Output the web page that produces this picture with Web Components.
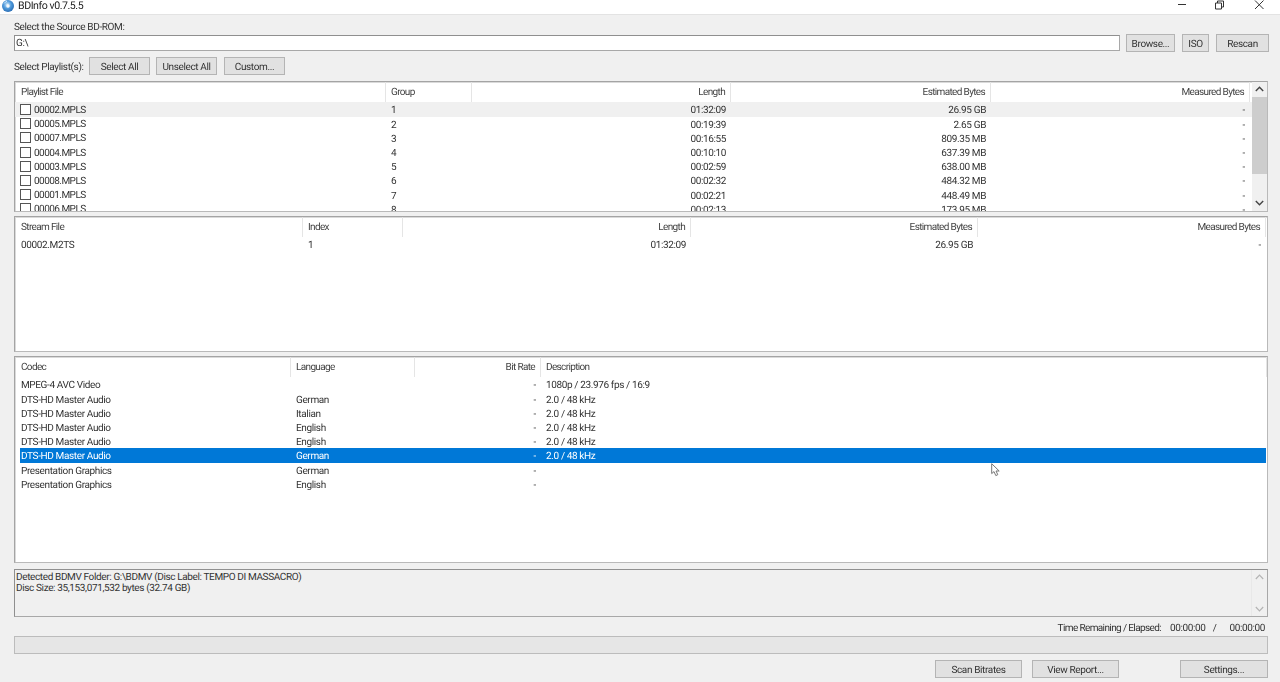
<!DOCTYPE html>
<html><head><meta charset="utf-8"><title>BDInfo</title>
<style>
html,body{margin:0;padding:0;height:100%;overflow:hidden}
body{background:#f0f0f0;font:10px Roboto,"Liberation Sans",Arial,sans-serif;letter-spacing:-.37px;text-rendering:geometricPrecision;color:#333;position:relative;width:1280px;height:682px}
.r{text-align:right}
</style></head><body>
<app-window>
  <title-bar slot="top">BDInfo v0.7.5.5</title-bar>
  <text-label style="height:13px;margin-top:5px">Select the Source BD-ROM:</text-label>
  <tool-row style="margin-top:1px;height:18px;margin-right:-1px">
    <text-box style="flex:1;margin-right:6px">G:\</text-box>
    <win-button style="width:49px;margin-right:7px">Browse...</win-button>
    <win-button style="width:27px;margin-right:7px">ISO</win-button>
    <win-button style="width:53px">Rescan</win-button>
  </tool-row>
  <tool-row style="margin-top:5px;height:18px">
    <text-label style="width:75px;align-self:center">Select Playlist(s):</text-label>
    <win-button style="width:61px;margin-right:6px">Select All</win-button>
    <win-button style="width:61px;margin-right:7px">Unselect All</win-button>
    <win-button style="width:61px">Custom...</win-button>
  </tool-row>

  <list-view style="height:131px;margin-top:6px;--cols:371px 86px 259px 260px 259px" scroll>
    <list-row header><span>Playlist File</span><span>Group</span><span class="r">Length</span><span class="r">Estimated Bytes</span><span class="r">Measured Bytes</span></list-row>
    <list-row hot><check-cell>00002.MPLS</check-cell><span>1</span><span class="r">01:32:09</span><span class="r">26.95 GB</span><span class="r">-</span></list-row>
    <list-row><check-cell>00005.MPLS</check-cell><span>2</span><span class="r">00:19:39</span><span class="r">2.65 GB</span><span class="r">-</span></list-row>
    <list-row><check-cell>00007.MPLS</check-cell><span>3</span><span class="r">00:16:55</span><span class="r">809.35 MB</span><span class="r">-</span></list-row>
    <list-row><check-cell>00004.MPLS</check-cell><span>4</span><span class="r">00:10:10</span><span class="r">637.39 MB</span><span class="r">-</span></list-row>
    <list-row><check-cell>00003.MPLS</check-cell><span>5</span><span class="r">00:02:59</span><span class="r">638.00 MB</span><span class="r">-</span></list-row>
    <list-row><check-cell>00008.MPLS</check-cell><span>6</span><span class="r">00:02:32</span><span class="r">484.32 MB</span><span class="r">-</span></list-row>
    <list-row><check-cell>00001.MPLS</check-cell><span>7</span><span class="r">00:02:21</span><span class="r">448.49 MB</span><span class="r">-</span></list-row>
    <list-row><check-cell>00006.MPLS</check-cell><span>8</span><span class="r">00:02:13</span><span class="r">173.95 MB</span><span class="r">-</span></list-row>
  </list-view>

  <list-view style="height:136px;margin-top:4px;--cols:288px 100px 288px 287px 288px">
    <list-row header><span>Stream File</span><span>Index</span><span class="r">Length</span><span class="r">Estimated Bytes</span><span class="r">Measured Bytes</span></list-row>
    <list-row><span>00002.M2TS</span><span>1</span><span class="r">01:32:09</span><span class="r">26.95 GB</span><span class="r">-</span></list-row>
  </list-view>

  <list-view style="height:207px;margin-top:4px;--cols:276px 124px 126px 726px">
    <list-row header><span>Codec</span><span>Language</span><span class="r">Bit Rate</span><span>Description</span></list-row>
    <list-row><span>MPEG-4 AVC Video</span><span></span><span class="r">-</span><span>1080p / 23.976 fps / 16:9</span></list-row>
    <list-row><span>DTS-HD Master Audio</span><span>German</span><span class="r">-</span><span>2.0 / 48 kHz</span></list-row>
    <list-row><span>DTS-HD Master Audio</span><span>Italian</span><span class="r">-</span><span>2.0 / 48 kHz</span></list-row>
    <list-row><span>DTS-HD Master Audio</span><span>English</span><span class="r">-</span><span>2.0 / 48 kHz</span></list-row>
    <list-row><span>DTS-HD Master Audio</span><span>English</span><span class="r">-</span><span>2.0 / 48 kHz</span></list-row>
    <list-row selected><span>DTS-HD Master Audio</span><span>German</span><span class="r">-</span><span>2.0 / 48 kHz</span></list-row>
    <list-row><span>Presentation Graphics</span><span>German</span><span class="r">-</span><span></span></list-row>
    <list-row><span>Presentation Graphics</span><span>English</span><span class="r">-</span><span></span></list-row>
  </list-view>

  <log-box style="height:48px;margin-top:6px">Detected BDMV Folder: G:\BDMV (Disc Label: TEMPO DI MASSACRO)<br>Disc Size: 35,153,071,532 bytes (32.74 GB)</log-box>

  <time-row style="height:14px;margin-top:4px"></time-row>
  <progress-bar style="height:18px;margin-top:1px"></progress-bar>

  <tool-row style="margin-top:6px;height:18px;justify-content:flex-end">
    <win-button style="width:87px;margin-right:10px">Scan Bitrates</win-button>
    <win-button style="width:87px;margin-right:61px">View Report...</win-button>
    <win-button style="width:88px">Settings...</win-button>
  </tool-row>
</app-window>
<mouse-cursor></mouse-cursor>
<script>
function def(name,css,html,init){
  customElements.define(name,class extends HTMLElement{
    constructor(){super();const s=this.attachShadow({mode:'open'});s.innerHTML='<style>'+css+'</style>'+html;}
    connectedCallback(){if(init)init(this)}
  });
}
def('app-window',`:host{display:flex;flex-direction:column;width:1280px;height:682px;box-sizing:border-box;filter:blur(.3px)}
 .main{display:flex;flex-direction:column;padding:0 12px 0 14px;flex:1;min-height:0;border-left:1px solid #e4e4e4;margin-left:-1px}`,
 `<slot name="top"></slot><div class="main"><slot></slot></div>`);
def('title-bar',`:host{display:flex;align-items:center;height:15px;background:#fff;border-bottom:1px solid #e3e3e3;box-sizing:border-box;position:relative;font:10.6px Roboto,"Liberation Sans",Arial,sans-serif;letter-spacing:-.45px;color:#222}
 .ico{margin:-2px 4px 0 2px;width:12px;height:12px;flex:none}
 .t{margin-top:-3px}
 svg.b{display:block;position:absolute;top:0}`,
 `<svg class="ico" viewBox="0 0 12 12"><defs><radialGradient id="g" cx=".45" cy=".4" r=".7"><stop offset="0" stop-color="#d8ecfb"/><stop offset=".45" stop-color="#4f9bdc"/><stop offset="1" stop-color="#1f5fa8"/></radialGradient></defs><circle cx="6" cy="6" r="6" fill="url(#g)"/><circle cx="6" cy="6" r="1.7" fill="#f4f8fc"/><path d="M2 3.5A5 5 0 0 1 5 1.4" stroke="#d3e9fa" stroke-width="1" fill="none"/></svg><span class="t"><slot></slot></span>
 <svg class="b" style="left:1177px" width="11" height="10" viewBox="0 0 11 10"><path d="M1 4.5H9" stroke="#333" stroke-width="1"/></svg>
 <svg class="b" style="left:1214px" width="11" height="10" viewBox="0 0 11 10"><path d="M1.5 3h6v6h-6zM3.5 3V1h6v6H7.5" fill="none" stroke="#333" stroke-width="1"/></svg>
 <svg class="b" style="left:1254px" width="11" height="10" viewBox="0 0 11 10"><path d="M1 0.5L9.5 9M9.5 0.5L1 9" fill="none" stroke="#333" stroke-width="1"/></svg>`);
def('text-label',`:host{display:block;line-height:15px;height:13px;white-space:nowrap}`,`<slot></slot>`);
def('tool-row',`:host{display:flex;align-items:stretch;flex:none}`,`<slot></slot>`);
def('text-box',`:host{display:block;box-sizing:border-box;background:#fff;border:1px solid #8f8f8f;border-bottom-color:#a8a8a8;border-right-color:#a8a8a8;padding:0 1px;line-height:16px;margin-top:1px;height:16px;overflow:hidden}`,`<slot></slot>`);
def('win-button',`:host{display:flex;align-items:center;justify-content:center;box-sizing:border-box;background:#e1e1e1;border:1px solid #b4b4b4;padding-top:2px;color:#333;white-space:nowrap;flex:none}`,`<slot></slot>`);
def('list-view',`:host{display:block;box-sizing:border-box;background:#fff;border:1px solid #a4a4a4;border-bottom-color:#b9b9b9;border-right-color:#b9b9b9;box-shadow:inset 1px 1px 0 #dadada;position:relative;overflow:hidden;flex:none}
 .bar{display:none;position:absolute;right:0;top:0;bottom:0;width:15px;background:#f0f0f0}
 :host([scroll]) .bar{display:block}
 .th{position:absolute;left:0;right:0;top:15px;height:77px;background:#cdcdcd}
 svg{position:absolute;left:3px}`,
 `<slot></slot><div class="bar"><svg style="top:4px" width="9" height="6" viewBox="0 0 9 6"><path d="M.8 5L4.5 1.2 8.2 5" fill="none" stroke="#444" stroke-width="1.4"/></svg><div class="th"></div><svg style="bottom:5px" width="9" height="6" viewBox="0 0 9 6"><path d="M.8 1L4.5 4.8 8.2 1" fill="none" stroke="#444" stroke-width="1.4"/></svg></div>`);
def('list-row',`:host{display:grid;grid-template-columns:var(--cols);grid-template-rows:14.2px;height:14.2px;line-height:17px;white-space:nowrap}
 :host([header]){grid-template-rows:20.4px;height:20.4px;line-height:22px;color:#444;letter-spacing:-.65px}
 :host([hot]){background:#f0f0f0}
 :host([selected]){background:linear-gradient(#0078d7,#0078d7) 5px 0/calc(100% - 6px) 100% no-repeat;color:#fff}
 ::slotted(*){padding:0 5px;overflow:hidden;box-sizing:border-box}
 :host([header]) ::slotted(*){border-right:1px solid #e5e5e5}
 ::slotted(:first-child){padding-left:6px}`,`<slot></slot>`);
def('check-cell',`:host{display:flex;align-items:center;height:14.2px;letter-spacing:-.55px}
 i{display:block;width:9px;height:9px;border:1px solid #555;margin:0 3px 0 -1px;background:#fff;flex:none}
 span{display:block;line-height:14.2px;margin-top:3.2px}`,`<i></i><span><slot></slot></span>`);
def('log-box',`:host{display:block;box-sizing:border-box;background:#f0f0f0;border:1px solid #8f8f8f;border-bottom-color:#a8a8a8;border-right-color:#a8a8a8;padding:2px 1px;line-height:11.2px;position:relative;flex:none}
 .bar{position:absolute;right:0;top:0;bottom:0;width:15px;border-left:1px solid #e8e8e8}
 svg{position:absolute;left:3px}`,`<slot></slot><div class="bar"><svg style="top:4px" width="9" height="6" viewBox="0 0 9 6"><path d="M.8 5L4.5 1.2 8.2 5" fill="none" stroke="#b4b4b4" stroke-width="1.2"/></svg><svg style="bottom:4px" width="9" height="6" viewBox="0 0 9 6"><path d="M.8 1L4.5 4.8 8.2 1" fill="none" stroke="#b4b4b4" stroke-width="1.2"/></svg></div>`);
def('time-row',`:host{display:flex;justify-content:flex-end;align-items:center;flex:none;padding:1px 3px 0 0;box-sizing:border-box;white-space:nowrap}
 span{display:block} .a{margin-right:9px;letter-spacing:-.62px}.s{margin:0 13px 0 7px}`,
 `<span class="a">Time Remaining / Elapsed:</span><span>00:00:00</span><span class="s">/</span><span>00:00:00</span>`);
def('progress-bar',`:host{display:block;box-sizing:border-box;background:#e6e6e6;border:1px solid #bcbcbc;flex:none}`,``);
def('mouse-cursor',`:host{display:block;position:absolute;left:991px;top:463px;width:10px;height:14px}`,
 `<svg width="10" height="14" viewBox="0 0 10 14"><path d="M.7.7V10.6L3 8.6 4.8 12.6 6.8 11.7 5 8H8.2Z" fill="#fff" stroke="#777" stroke-width="1"/></svg>`);
</script>
</body></html>
